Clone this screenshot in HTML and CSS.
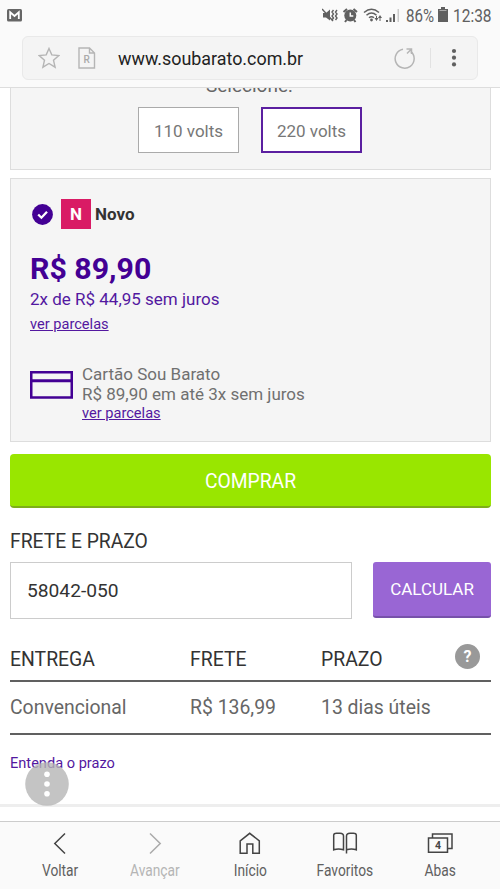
FILE: index.html
```html
<!DOCTYPE html>
<html lang="pt-BR">
<head>
<meta charset="utf-8">
<title>Sou Barato</title>
<link rel="stylesheet" href="styles.css">
</head>
<body>
<header class="browser">
  <div class="status">
    <svg class="gmail" width="15" height="13" viewBox="0 0 15 13"><rect width="15" height="12.5" rx="1.5" fill="#666"/><path d="M3.2 10V3.3L7.5 7 11.800 3.300V10" fill="none" stroke="#fff" stroke-width="1.800"/></svg>
    <svg class="system" width="80" height="18" viewBox="0 0 80 18">
      <g fill="#606060">
        <path d="M1 7h3l4-3.500v11L4 11.500H1z"/><path d="M0 3l11 12" stroke="#606060" stroke-width="1.500"/>
        <path d="M11.500 4l-1.500 2 1.500 2-1.500 2 1.500 2-1.500 2M15 4l-1.500 2 1.500 2-1.500 2 1.500 2-1.500 2" fill="none" stroke="#606060" stroke-width="1.400"/>
        <circle cx="28.300" cy="9.500" r="6"/><path d="M21.500 6l3.500-3M35 6l-3.500-3M24.500 14l-1.500 2M32 14l1.500 2" stroke="#606060" stroke-width="2"/>
        <path d="M28.300 6.500v3.500h3" fill="none" stroke="#fafafa" stroke-width="1.500"/>
        <g fill="none" stroke="#606060" stroke-width="1.500"><path d="M42 6.500q7.500-6.500 15 0M44.500 9.200q5-4.500 10 0M47 11.800q2.500-2.200 5 0"/></g>
        <circle cx="49.500" cy="14" r="1.400"/>
        <path d="M52.500 12h4l-2 3zM56 12h4l-2-3z"/><path d="M54.500 10v4M58 11v4" stroke="#606060"/>
        <path d="M64 14h2v2h-2zM67.500 11.500h2V16h-2zM71 8h2v8h-2z"/><path d="M75.500 3h1.500v13h-1.500z" fill="#ccc"/>
      </g>
    </svg>
    <span class="percent">86%</span>
    <svg class="battery" width="10" height="15" viewBox="0 0 10 15"><path d="M3 0h4v2h3v13H0V2h3z" fill="#606060"/><path d="M1.500 3.500h7" stroke="#aaa"/></svg>
    <span class="clock">12:38</span>
  </div>
  <div class="address">
    <svg class="star" width="22" height="22" viewBox="0 0 22 22"><path d="M11 1.500l2.800 6.400 7 .7-5.300 4.600 1.600 7-6.100-3.700-6.100 3.700 1.600-7-5.300-4.600 7-.7z" fill="none" stroke="#b5b5b5" stroke-width="1.400"/></svg>
    <svg class="reader" width="18" height="22" viewBox="0 0 18 22"><path d="M1 1h10.500L16.500 6v15H1zM11.500 1v5h5" fill="none" stroke="#b5b5b5" stroke-width="1.400"/><text x="8.700" y="16" text-anchor="middle" font-size="10" font-weight="500" fill="#aaa">R</text></svg>
    <span class="url">www.soubarato.com.br</span>
    <svg class="reload" width="22" height="23" viewBox="0 0 22 23"><path d="M9 2.300A9.500 9.500 0 1 0 16.800 4.400" fill="none" stroke="#b5b5b5" stroke-width="1.500"/><path d="M12.500 2h5v5M17 2.500l-4 4" fill="none" stroke="#b5b5b5" stroke-width="1.500"/></svg>
    <i class="divider"></i>
    <svg class="more" width="6" height="20" viewBox="0 0 6 20"><g fill="#606060"><circle cx="3" cy="3" r="2.100"/><circle cx="3" cy="9.700" r="2.100"/><circle cx="3" cy="16.400" r="2.100"/></g></svg>
  </div>
</header>
<main>
  <section class="panel voltage">
    <p class="select">Selecione:</p>
    <div class="options"><span class="option">110 volts</span><span class="option active">220 volts</span></div>
  </section>
  <section class="panel offer">
    <div class="condition">
      <svg width="21" height="21" viewBox="0 0 21 21"><circle cx="10.500" cy="10.500" r="10.400" fill="#430094"/><path d="M6.200 10.500l3.200 3.200 5.600-6" fill="none" stroke="#fff" stroke-width="2.300"/></svg>
      <b class="badge">N</b><strong>Novo</strong>
    </div>
    <p class="price">R$ 89,90</p>
    <p class="installments">2x de R$ 44,95 sem juros</p>
    <a class="link first">ver parcelas</a>
    <div class="card">
      <svg width="43" height="28" viewBox="0 0 43 28"><path d="M1.250 1.250h40.500v25.200H1.250z" fill="none" stroke="#430094" stroke-width="2.500"/><path d="M1 9.800h41" stroke="#430094" stroke-width="3"/></svg>
      <div class="card-text"><p class="card-name">Cartão Sou Barato</p><p class="card-value">R$ 89,90 em até 3x sem juros</p><a class="link">ver parcelas</a></div>
    </div>
  </section>
  <button class="buy">COMPRAR</button>
  <h2>FRETE E PRAZO</h2>
  <div class="shipping"><input value="58042-050" aria-label="CEP"><button class="calc">CALCULAR</button></div>
  <div class="row head"><span>ENTREGA</span><span>FRETE</span><span>PRAZO</span><b class="help">?</b></div>
  <div class="row values"><span>Convencional</span><span>R$ 136,99</span><span>13 dias úteis</span></div>
  <div class="explain"><a>Entenda o prazo</a>
    <svg class="bubble" width="44" height="44" viewBox="0 0 44 44"><circle cx="22" cy="22" r="21.800" fill="#b5b5b5" fill-opacity=".8"/><g fill="#fff"><circle cx="22" cy="12.300" r="2.800"/><circle cx="22" cy="22" r="2.800"/><circle cx="22" cy="31.700" r="2.800"/></g></svg>
  </div>
</main>
<nav>
  <a><svg width="26" height="26" viewBox="0 0 26 26"><path d="M18 3.500L7.800 13.500 18 23.500"/></svg><span>Voltar</span></a>
  <a class="off"><svg width="26" height="26" viewBox="0 0 26 26"><path d="M8 3.500L18.200 13.500 8 23.500"/></svg><span>Avançar</span></a>
  <a><svg width="26" height="26" viewBox="0 0 26 26"><path d="M3.200 23.300V10.800L12.700 3.300 22.300 10.800v12.500h-6.500V14H10v9.300z"/></svg><span>Início</span></a>
  <a><svg width="26" height="26" viewBox="0 0 26 26"><path d="M1.700 19.800V5Q2 3.200 4.500 3.200H8Q11.500 3.200 11.500 6V19.800Q6.500 18 1.700 19.800zM14.500 23.500V6Q14.500 3.200 18 3.200H21.500Q24 3.200 24.300 5V19.800Q19.500 18 14.500 19.800"/></svg><span>Favoritos</span></a>
  <a><svg width="26" height="26" viewBox="0 0 26 26"><path d="M1.500 8h19v14.300h-19zM5.500 8V4h19.500v14.500h-4.500"/><text x="11" y="19" text-anchor="middle" font-size="10.500" font-weight="700" fill="#444">4</text></svg><span>Abas</span></a>
</nav>
</body>
</html>
```
FILE: styles.css
```css
* { box-sizing: border-box; }
body { margin: 0; width: 500px; height: 889px; overflow: hidden; display: flex; flex-direction: column; background: #fff; font-family: Roboto, "Liberation Sans", sans-serif; color: #666; }
p, h2 { margin: 0; font-weight: 400; }
svg { display: block; flex: none; }
span, p, a, strong { white-space: nowrap; }
button, input { font: inherit; }
.browser { height: 88px; flex: none; background: #fafafa; border-bottom: 1px solid #ddd; }
.status { height: 30px; display: flex; align-items: flex-start; padding: 0 8px 0 7px; font-size: 18px; line-height: 20px; color: #606060; }
.gmail { margin-top: 9px; }
.system { margin: 6px 0 0 300px; }
.percent { width: 28px; margin: 6px 0 0 4px; transform: scaleX(.84); transform-origin: 0 0; }
.battery { margin: 7px 0 0 4px; }
.clock { width: 39px; margin: 6px 0 0 5px; transform: scaleX(.86); transform-origin: 0 0; }
.address { width: 456px; height: 44px; margin: 6px 0 0 22px; border: 1px solid #e9e9e9; border-radius: 6px; background: #f4f4f4; display: flex; align-items: center; }
.star { margin-left: 15px; }
.reader { margin-left: 18px; }
.url { width: 186px; margin: 0 0 0 22px; font-size: 17.9px; color: #222; }
.reload { margin-left: 90px; }
.divider { width: 1px; height: 20px; margin-left: 14px; background: #e2e2e2; }
.more { margin-left: 20px; }
main { flex: 1; min-height: 0; overflow: hidden; padding: 0 9px 0 10px; }
.panel { background: #f5f5f5; border: 1px solid #ddd; }
.voltage { display: flow-root; height: 82px; border-top: 0; }
.select { height: 19px; margin-left: 195px; line-height: 22px; margin-top: -13px; font-size: 19px; color: #666; }
.options { display: flex; gap: 22px; margin: 13px 0 0 127px; }
.option { width: 101px; height: 46px; border: 1px solid #aaa; background: #fff; color: #777; font-size: 17px; line-height: 46px; text-align: center; }
.option.active { border: 2px solid #5b1fa0; line-height: 44px; }
.offer { height: 264px; margin-top: 8px; padding: 20px 0 0 19px; }
.condition { display: flex; align-items: center; height: 30px; padding-left: 2px; }
.badge { width: 30px; height: 30px; margin: 0 4px 0 8px; background: #d91b65; color: #fff; font-size: 17px; line-height: 31px; text-align: center; }
.condition strong { color: #333; font-size: 17px; }
.price { margin-top: 22px; height: 35px; line-height: 36px; font-size: 30.300px; font-weight: 700; color: #430094; }
.installments { margin-top: 2px; height: 22px; font-size: 17px; line-height: 22px; color: #5318a0; }
.link { display: block; font-size: 14.600px; line-height: 18px; color: #5318a0; text-decoration: underline; }
.link.first { margin-top: 5px; }
.card { display: flex; gap: 9px; margin-top: 31px; }
.card svg { margin-top: 7px; }
.card-text p { font-size: 17px; line-height: 20px; height: 20px; color: #707070; }
.buy { display: block; width: 481px; height: 54px; margin: 12px 0 0; border: 0; border-bottom: 2px solid #7eae19; border-radius: 4px; background: #99e600; color: #fff; font-size: 19.300px; padding: 3px 0 0; }
h2 { margin-top: 22px; height: 23px; font-size: 19.300px; line-height: 24px; color: #333; }
.shipping { display: flex; justify-content: space-between; margin-top: 9px; }
input { width: 342px; height: 57px; padding: 0 16px; border: 1px solid #ccc; font-size: 19.200px; color: #333; background: #fff; }
.calc { width: 118px; height: 56px; padding: 0; border: 0; border-bottom: 2px solid #7751aa; border-radius: 3px; background: #9966d4; color: #fff; font-size: 17px; }
.row { display: grid; grid-template-columns: 180px 131px 134px 1fr; font-size: 19.400px; border-bottom: 2px solid #606060; }
.head { height: 63px; line-height: 24px; padding-top: 29px; color: #333; }
.help { width: 25px; height: 25px; margin-top: -4px; border-radius: 50%; background: #999; color: #fff; font-size: 16px; line-height: 25px; text-align: center; }
.values { height: 53px; line-height: 24px; padding-top: 14px; }
.explain { position: relative; height: 72px; margin: 0 -9px 0 -10px; padding: 18px 0 0 10px; border-bottom: 3px solid #eee; font-size: 14.600px; line-height: 20px; color: #5318a0; }
.bubble { position: absolute; left: 25px; top: 27px; }
nav { height: 68px; flex: none; display: flex; padding: 0 12px; background: #fafafa; border-top: 1px solid #ccc; }
nav a { flex: 1; display: flex; flex-direction: column; align-items: center; padding-top: 8px; color: #606060; font-size: 16px; line-height: 20px; }
nav svg { fill: none; stroke: #444; stroke-width: 1.500; }
nav text { stroke: none; }
nav span { margin-top: 5px; transform: scaleX(.86); }
nav .off { color: #b5b5b5; }
nav .off svg { stroke: #aaa; }
```
